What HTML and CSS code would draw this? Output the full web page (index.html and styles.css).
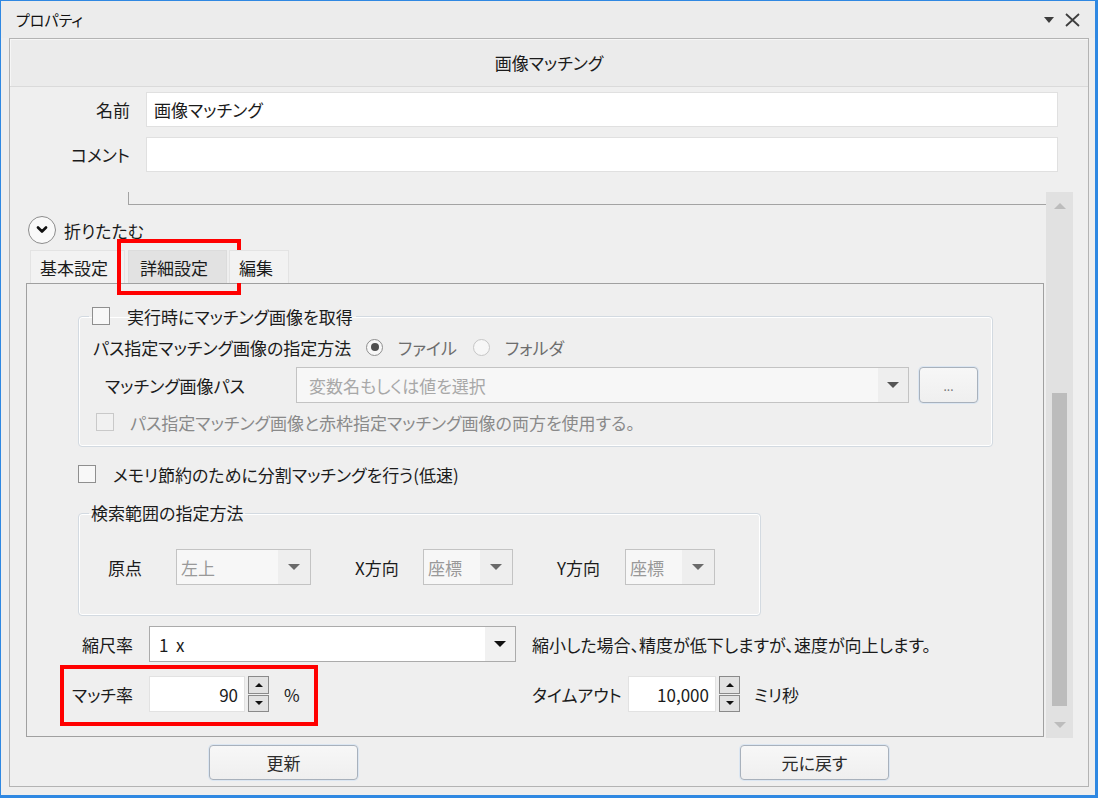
FILE: index.html
```html
<!DOCTYPE html>
<html lang="ja">
<head>
<meta charset="utf-8">
<title>プロパティ</title>
<link rel="stylesheet" href="styles.css">
</head>
<body>
<div class="window">
  <div class="titlebar">
    <span class="title">プロパティ</span>
    <div class="title-tools">
      <svg class="caret" width="10" height="6" viewBox="0 0 10 6"><path d="M0 0H10L5 6Z"/></svg>
      <svg class="close" width="15" height="14" viewBox="0 0 15 14"><path d="M1 1L14 13M14 1L1 13"/></svg>
    </div>
  </div>

  <div class="frame">
    <div class="panel">
      <div class="panel-head">画像マッチング</div>

      <div class="field-row name-row">
        <span class="field-label">名前</span>
        <div class="text-input">画像マッチング</div>
      </div>
      <div class="field-row comment-row">
        <span class="field-label">コメント</span>
        <div class="text-input"></div>
      </div>

      <div class="scroll-area">
        <div class="scroll-content">
          <div class="prev-block"></div>

          <div class="collapse-row">
            <span class="collapse-btn">
              <svg width="12" height="8" viewBox="0 0 12 8"><path d="M2 1.5L6 5.5L10 1.5"/></svg>
            </span>
            <span>折りたたむ</span>
          </div>

          <div class="tabs">
            <div class="tab tab-basic">基本設定</div>
            <div class="tab tab-active">詳細設定<span class="mark mark-tab"></span></div>
            <div class="tab tab-edit">編集</div>
          </div>

          <div class="tab-panel">
            <fieldset class="group group-capture">
              <legend class="legend-check">
                <span class="checkbox"></span>
                <span>実行時にマッチング画像を取得</span>
              </legend>
              <div class="method-row">
                <span class="method-label">パス指定マッチング画像の指定方法</span>
                <span class="option option-file"><span class="radio radio-on"></span><span class="muted">ファイル</span></span>
                <span class="option"><span class="radio"></span><span class="muted">フォルダ</span></span>
              </div>
              <div class="path-row">
                <span class="path-label">マッチング画像パス</span>
                <div class="combo combo-path">
                  <span class="combo-text placeholder">変数名もしくは値を選択</span>
                  <span class="combo-arrow"><span class="tri tri-dark"></span></span>
                </div>
                <button class="btn btn-browse">...</button>
              </div>
              <div class="both-row">
                <span class="checkbox checkbox-off"></span>
                <span class="disabled-text">パス指定マッチング画像と赤枠指定マッチング画像の両方を使用する。</span>
              </div>
            </fieldset>

            <div class="memory-row">
              <span class="checkbox"></span>
              <span>メモリ節約のために分割マッチングを行う(低速)</span>
            </div>

            <fieldset class="group group-range">
              <legend class="legend-text">検索範囲の指定方法</legend>
              <div class="range-row">
                <span class="range-label">原点</span>
                <div class="combo combo-small combo-origin">
                  <span class="combo-text dim">左上</span>
                  <span class="combo-arrow"><span class="tri tri-grey"></span></span>
                </div>
                <span class="range-label range-gap">X方向</span>
                <div class="combo combo-small combo-axis">
                  <span class="combo-text dim">座標</span>
                  <span class="combo-arrow"><span class="tri tri-grey"></span></span>
                </div>
                <span class="range-label range-gap">Y方向</span>
                <div class="combo combo-small combo-axis">
                  <span class="combo-text dim">座標</span>
                  <span class="combo-arrow"><span class="tri tri-grey"></span></span>
                </div>
              </div>
            </fieldset>

            <div class="params">
              <div class="param">
                <span class="param-label">縮尺率</span>
                <div class="combo combo-scale">
                  <span class="combo-text">1&nbsp;&nbsp;x</span>
                  <span class="combo-arrow"><span class="tri tri-black"></span></span>
                </div>
              </div>
              <div class="param">
                <span>縮小した場合、精度が低下しますが、速度が向上します。</span>
              </div>

              <div class="param match-field">
                <span class="param-label">マッチ率</span>
                <div class="num-input num-match">90</div>
                <div class="spinner">
                  <span class="spin"><span class="tri-s tri-up"></span></span>
                  <span class="spin"><span class="tri-s tri-down"></span></span>
                </div>
                <span class="unit">%</span>
                <span class="mark mark-match"></span>
              </div>
              <div class="param">
                <span class="timeout-label">タイムアウト</span>
                <div class="num-input num-timeout">10,000</div>
                <div class="spinner">
                  <span class="spin"><span class="tri-s tri-up"></span></span>
                  <span class="spin"><span class="tri-s tri-down"></span></span>
                </div>
                <span class="unit unit-ms">ミリ秒</span>
              </div>
            </div>
          </div>
        </div>

        <div class="scrollbar">
          <div class="sb-btn"><span class="sb-up"></span></div>
          <div class="sb-track"><div class="sb-thumb"></div></div>
          <div class="sb-btn"><span class="sb-down"></span></div>
        </div>
      </div>

      <div class="actions">
        <button class="btn btn-action">更新</button>
        <button class="btn btn-action">元に戻す</button>
      </div>
    </div>
  </div>
</div>
</body>
</html>
```

FILE: styles.css
```css
* {
  box-sizing: border-box;
}

html,
body {
  margin: 0;
  padding: 0;
}

body {
  font-family: "Noto Sans CJK JP", "Noto Sans", sans-serif;
  font-size: 17px;
  font-feature-settings: "palt";
  color: #1b1b1b;
  background: #eeeeee;
}

/* window shell */
.window {
  width: 1098px;
  height: 798px;
  border-style: solid;
  border-color: #2f88e2;
  border-width: 1px 3px 3px 1px;
  background: #eeeeee;
  display: flex;
  flex-direction: column;
}

.titlebar {
  height: 37px;
  flex: none;
  display: flex;
  align-items: center;
  justify-content: space-between;
  padding: 0 15px 0 15px;
  background: #ececec;
}

.title {
  font-size: 15px;
  line-height: 1;
  color: #111;
}

.title-tools {
  display: flex;
  align-items: center;
  gap: 11px;
}

.caret {
  fill: #3d3d3d;
  margin-top: 1px;
}

.close {
  fill: none;
  stroke: #3d3d3d;
  stroke-width: 1.8;
}

.frame {
  flex: 1;
  display: flex;
  padding: 0 6px 8px 8px;
}

.panel {
  flex: 1;
  display: flex;
  flex-direction: column;
  border: 1px solid #b3b3b3;
  background: #efefef;
}

.panel-head {
  height: 48px;
  flex: none;
  display: flex;
  align-items: center;
  justify-content: center;
  background: #ebebeb;
  border-bottom: 1px solid #dadada;
  box-shadow: inset 1px 1px 0 #f6f6f6;
}

/* name / comment */
.field-row {
  display: flex;
  align-items: center;
  height: 35px;
  margin-right: 30px;
  flex: none;
}

.name-row {
  margin-top: 5px;
}

.comment-row {
  margin-top: 10px;
}

.field-label {
  width: 120px;
  margin-right: 16px;
  text-align: right;
}

.text-input {
  flex: 1;
  height: 35px;
  display: flex;
  align-items: center;
  padding-left: 7px;
  background: #ffffff;
  border: 1px solid #e0e0e0;
}

/* scrolling part */
.scroll-area {
  margin-top: 20px;
  height: 546px;
  flex: none;
  display: flex;
}

.scroll-content {
  flex: 1;
  overflow: hidden;
  display: flex;
  flex-direction: column;
}

.prev-block {
  flex: none;
  height: 13px;
  margin-left: 118px;
  border-left: 1px solid #a3a3a3;
  border-bottom: 1px solid #a3a3a3;
}

.collapse-row {
  flex: none;
  margin-top: 11px;
  height: 28px;
  padding-left: 18px;
  display: flex;
  align-items: center;
  gap: 8px;
}

.collapse-btn {
  width: 28px;
  height: 28px;
  border-radius: 50%;
  border: 1.5px solid #8c8c8c;
  background: #f9f9f9;
  display: flex;
  align-items: center;
  justify-content: center;
}

.collapse-btn svg {
  fill: none;
  stroke: #111;
  stroke-width: 2.6;
  stroke-linecap: round;
  stroke-linejoin: round;
}

/* tabs */
.tabs {
  flex: none;
  margin-top: 6px;
  padding-left: 20px;
  height: 33px;
  display: flex;
}

.tab {
  position: relative;
  height: 33px;
  display: flex;
  align-items: center;
  background: #f2f2f2;
  border: 1px solid #e3e3e3;
  border-bottom: none;
}

.tab-basic {
  width: 95px;
  padding-left: 9px;
}

.tab-active {
  margin-left: 3px;
  width: 99px;
  padding-left: 11px;
  background: #e2e2e2;
  border-color: #dcdcdc;
}

.tab-edit {
  margin-left: 2px;
  width: 60px;
  padding-left: 9px;
}

.mark {
  position: absolute;
  border: 4px solid #ff0000;
  pointer-events: none;
}

.mark-tab {
  left: -12px;
  top: -12px;
  width: 124px;
  height: 56px;
}

.tab-panel {
  flex: none;
  height: 454px;
  margin: 0 2px 0 16px;
  border: 1px solid #a0a0a0;
  background: #efefef;
}

/* group boxes */
.group {
  margin: 0 0 0 51px;
  padding: 6px 10px 12px 10px;
  border: 1px solid #d3dae1;
  border-radius: 4px;
  box-shadow: inset 0 0 0 1px #ffffff;
  min-width: 0;
}

.group-capture {
  margin-top: 21px;
  width: 915px;
}

.group-range {
  margin-top: 16px;
  width: 683px;
  padding: 25px 10px 30px 10px;
}

.legend-check {
  display: flex;
  align-items: center;
  gap: 17px;
  height: 22px;
  padding: 0 3px;
}

.legend-text {
  height: 22px;
  line-height: 22px;
  padding: 0 2px;
}

.checkbox {
  width: 18px;
  height: 18px;
  flex: none;
  border: 1px solid #8f8f8f;
  background: #f8f8f8;
}

.checkbox-off {
  border-color: #c9c9c9;
  background: #f1f1f1;
}

.method-row {
  height: 28px;
  display: flex;
  align-items: center;
  padding-left: 4px;
}

.method-label {
  width: 273px;
}

.option {
  display: flex;
  align-items: center;
  gap: 15px;
}

.option-file {
  width: 107px;
}

.radio {
  width: 17px;
  height: 17px;
  border-radius: 50%;
  border: 1px solid #c6c6c6;
  background: #f7f7f7;
  display: flex;
  align-items: center;
  justify-content: center;
}

.radio-on {
  border-color: #8f8f8f;
}

.radio-on::after {
  content: "";
  width: 8px;
  height: 8px;
  border-radius: 50%;
  background: #4f4f4f;
}

.muted {
  color: #6d6d6d;
}

.path-row {
  margin-top: 6px;
  height: 36px;
  display: flex;
  align-items: center;
  padding-left: 16px;
}

.path-label {
  width: 191px;
}

.combo {
  height: 36px;
  display: flex;
  border: 1px solid #c3c3c3;
  background: #f7f7f7;
}

.combo-text {
  flex: 1;
  display: flex;
  align-items: center;
  white-space: nowrap;
}

.combo-arrow {
  width: 30px;
  display: flex;
  align-items: center;
  justify-content: center;
  background: #eeeeee;
}

.combo-path {
  width: 613px;
}

.combo-path .combo-text {
  padding-left: 12px;
}

.placeholder {
  color: #a8a8a8;
}

.tri {
  width: 0;
  height: 0;
  border-left: 6px solid transparent;
  border-right: 6px solid transparent;
  border-top: 6px solid #555;
}

.tri-dark {
  border-top-color: #555555;
}

.tri-grey {
  border-top-color: #6a6a6a;
}

.tri-black {
  border-top-color: #111111;
}

.btn {
  font: inherit;
  font-feature-settings: "palt";
  color: #2b2b2b;
  border: 1px solid #a8b1bc;
  border-radius: 4px;
  background: linear-gradient(#f7f7f7, #efefef);
  box-shadow: 0 0 0 1px #dbe6f2;
  padding: 0;
  cursor: default;
}

.btn-browse {
  margin-left: 10px;
  width: 59px;
  height: 36px;
  font-size: 12px;
  color: #777;
}

.both-row {
  margin-top: 7px;
  height: 24px;
  display: flex;
  align-items: center;
  gap: 16px;
  padding-left: 7px;
}

.disabled-text {
  color: #8a8a8a;
}

.memory-row {
  margin: 15px 0 0 51px;
  height: 24px;
  display: flex;
  align-items: center;
  gap: 17px;
}

.range-row {
  height: 36px;
  display: flex;
  align-items: center;
  padding-left: 19px;
}

.range-label {
  width: 68px;
  flex: none;
}

.range-gap {
  margin-left: 44px;
}

.combo-small .combo-text {
  padding-left: 4px;
}

.combo-small .combo-arrow {
  width: 32px;
}

.combo-origin {
  width: 135px;
}

.combo-axis {
  width: 90px;
}

.dim {
  color: #999999;
}

/* scale / rate / timeout */
.params {
  margin-top: 10px;
  display: grid;
  grid-template-columns: 489px 1fr;
  grid-auto-rows: 36px;
  column-gap: 16px;
  row-gap: 14px;
}

.param {
  display: flex;
  align-items: center;
}

.param-label {
  width: 106px;
  margin-right: 16px;
  text-align: right;
}

.combo-scale {
  width: 367px;
  background: #ffffff;
  border-color: #ababab;
}

.combo-scale .combo-text {
  padding-left: 9px;
}

.combo-scale .combo-arrow {
  background: #f1f1f1;
}

.match-field {
  position: relative;
}

.mark-match {
  left: 33px;
  top: -11px;
  width: 258px;
  height: 61px;
}

.num-input {
  height: 36px;
  display: flex;
  align-items: center;
  justify-content: flex-end;
  padding-right: 6px;
  background: #ffffff;
  border: 1px solid #e2e2e2;
}

.num-match {
  width: 96px;
}

.num-timeout {
  width: 88px;
}

.timeout-label {
  width: 96px;
}

.spinner {
  margin-left: 3px;
  width: 21px;
  height: 36px;
  display: flex;
  flex-direction: column;
  gap: 1px;
}

.spin {
  flex: 1;
  border: 1px solid #8a8a8a;
  background: #e2e2e2;
  display: flex;
  align-items: center;
  justify-content: center;
}

.tri-s {
  width: 0;
  height: 0;
  border-left: 4px solid transparent;
  border-right: 4px solid transparent;
}

.tri-up {
  border-bottom: 4px solid #111;
}

.tri-down {
  border-top: 4px solid #111;
}

.unit {
  margin-left: 15px;
}

.unit-ms {
  margin-left: 14px;
}

/* scrollbar */
.scrollbar {
  width: 27px;
  margin-right: 15px;
  flex: none;
  display: flex;
  flex-direction: column;
  background: #e1e1e1;
}

.sb-btn {
  height: 27px;
  display: flex;
  align-items: center;
  justify-content: center;
}

.sb-up {
  width: 0;
  height: 0;
  border-left: 6px solid transparent;
  border-right: 6px solid transparent;
  border-bottom: 6px solid #bcbcbc;
}

.sb-down {
  width: 0;
  height: 0;
  border-left: 6px solid transparent;
  border-right: 6px solid transparent;
  border-top: 6px solid #bcbcbc;
}

.sb-track {
  flex: 1;
}

.sb-thumb {
  margin: 174px 0 0 6px;
  width: 15px;
  height: 313px;
  background: #bcbcbc;
}

/* bottom buttons */
.actions {
  flex: none;
  margin-top: 7px;
  padding-left: 199px;
  display: flex;
  gap: 382px;
}

.btn-action {
  width: 149px;
  height: 35px;
}
```
